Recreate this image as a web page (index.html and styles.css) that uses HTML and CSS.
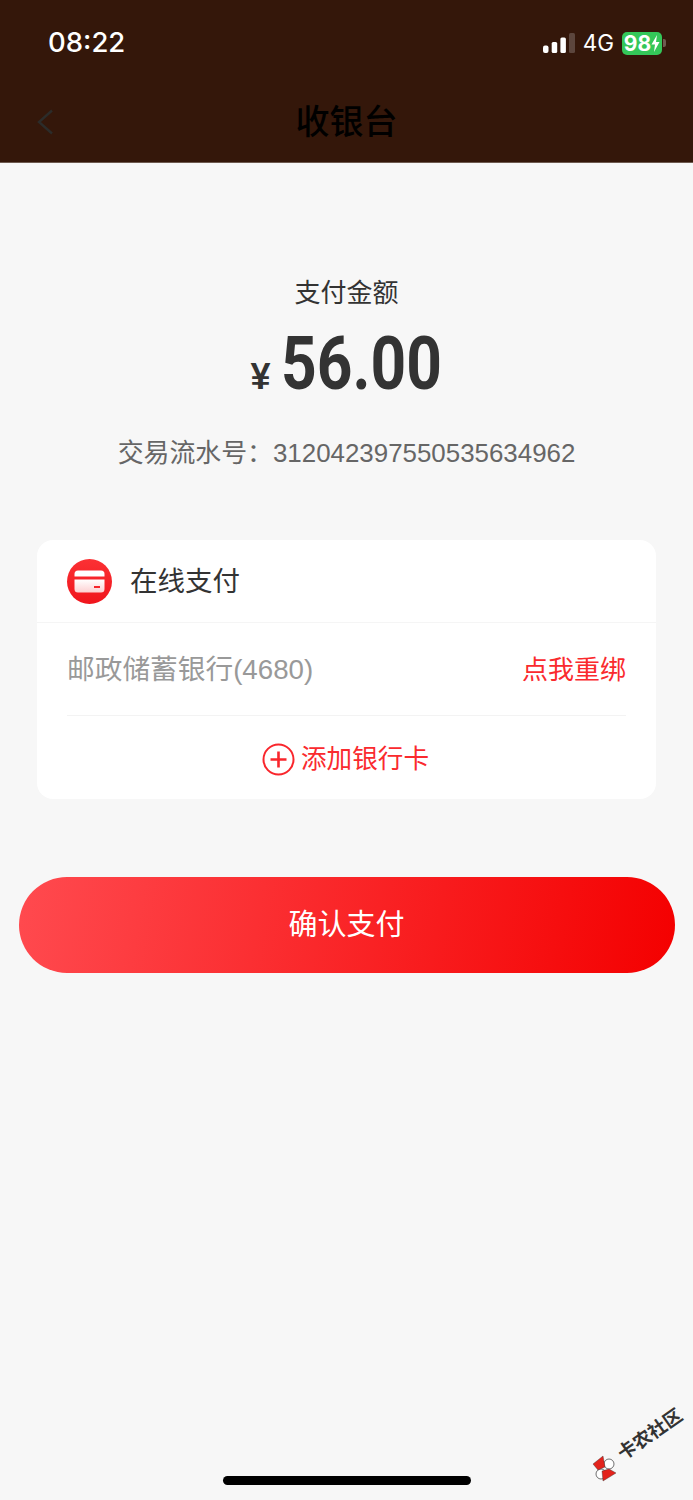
FILE: index.html
```html
<!DOCTYPE html>
<html lang="zh">
<head>
<meta charset="utf-8">
<title>收银台</title>
<link rel="stylesheet" href="styles.css">
</head>
<body>
<div class="page">
  <header class="header">
    <div class="status">
      <span class="time">08:22</span>
      <div class="status-right">
        <svg class="signal" width="32" height="20" viewBox="0 0 32 20">
          <rect x="0" y="12.500" width="5.500" height="7.500" rx="2" fill="#fff"/>
          <rect x="8.700" y="9" width="5.500" height="11" rx="1.500" fill="#fff"/>
          <rect x="17.400" y="4.500" width="5.500" height="15.500" rx="1.500" fill="#fff"/>
          <rect x="26" y="0" width="6" height="20" rx="1.500" fill="#5c463d"/>
        </svg>
        <span class="net">4G</span>
        <div class="battery">
          <span class="battery-body">98<svg class="bolt" width="9" height="17" viewBox="0 0 9 17"><path d="M6 0 0.500 9.500H4L3 17 8.500 7H5Z" fill="#fff"/></svg></span>
          <span class="battery-cap"></span>
        </div>
      </div>
    </div>
    <div class="nav">
      <svg class="back" width="16" height="26" viewBox="0 0 16 26"><path d="M15 1.500 2 13 15 24.500" fill="none" stroke="#2c2c2a" stroke-width="2.400"/></svg>
      <h1 class="title">收银台</h1>
    </div>
  </header>
  <main class="main">
    <section class="summary">
      <p class="label">支付金额</p>
      <p class="amount"><span class="yen">¥</span><span class="value">56.00</span></p>
      <p class="serial">交易流水号：<span class="serial-no">312042397550535634962</span></p>
    </section>
    <section class="card">
      <div class="card-head">
        <svg class="pay-icon" width="45" height="45" viewBox="0 0 45 45">
          <defs>
            <linearGradient id="disc" x1="0" y1="0" x2="0" y2="1"><stop offset="0" stop-color="#fb3134"/><stop offset="1" stop-color="#f0141c"/></linearGradient>
            <linearGradient id="cardfill" x1="0" y1="0" x2="0" y2="1"><stop offset="0" stop-color="#fff"/><stop offset="1" stop-color="#fdd0d2"/></linearGradient>
          </defs>
          <circle cx="22.500" cy="22.500" r="22.500" fill="url(#disc)"/>
          <path d="M7.500 15a3.500 3.500 0 0 1 3.500-3.500h23a3.500 3.500 0 0 1 3.500 3.500v2.500H7.500Z" fill="#fff"/>
          <path d="M7.500 20.500h30V30a3.500 3.500 0 0 1-3.500 3.500H11A3.500 3.500 0 0 1 7.500 30Z" fill="url(#cardfill)"/>
          <rect x="27" y="27" width="6" height="2" fill="#f5252b"/>
        </svg>
        <span class="card-title">在线支付</span>
      </div>
      <div class="card-body">
        <div class="bank-row">
          <span class="bank">邮政储蓄银行(4680)</span>
          <span class="rebind">点我重绑</span>
        </div>
        <div class="add-row">
          <svg class="plus" width="33" height="33" viewBox="0 0 33 33"><circle cx="16.500" cy="16.500" r="15" fill="none" stroke="#f9262c" stroke-width="2"/><path d="M8.500 16.500h16M16.500 8.500v16" stroke="#f9262c" stroke-width="2.600"/></svg>
          <span class="add">添加银行卡</span>
        </div>
      </div>
    </section>
    <button class="confirm" type="button">确认支付</button>
  </main>
  <div class="home-bar"></div>
  <svg class="wm-logo" width="26" height="28" viewBox="0 0 26 28">
    <circle cx="17" cy="10" r="5" fill="#fff" stroke="#333" stroke-width=".7"/>
    <circle cx="9" cy="20" r="5" fill="#fff" stroke="#333" stroke-width=".7"/>
    <path d="M1 10 11 2 13 13 6 16ZM11 27 24 19 17 15 10 17Z" fill="#e3231c" stroke="#333" stroke-width=".4"/>
  </svg>
  <span class="wm-text">卡农社区</span>
</div>
</body>
</html>
```
FILE: styles.css
```css
* { box-sizing: border-box; margin: 0; padding: 0; }
html, body { width: 693px; height: 1500px; overflow: hidden; }
body { background: #f7f7f7; font-family: "Liberation Sans", "Noto Sans CJK SC", sans-serif; }
.page { position: relative; width: 693px; height: 1500px; }

.header { height: 163px; background: #34170a; border-bottom: 1px solid #6e5a50; }
.status { height: 84px; display: flex; justify-content: space-between; align-items: flex-start; padding: 26px 27px 0 48px; }
.time { font: 500 27.500px/32px Inter, sans-serif; color: #fff; }
.status-right { display: flex; align-items: center; padding-top: 5px; }
.signal { display: block; margin-right: 8px; }
.net { font: 400 22.500px/24px Inter, sans-serif; color: #fff; margin-right: 8px; }
.battery { display: flex; align-items: center; }
.battery-body { display: flex; align-items: center; justify-content: center; width: 40px; height: 23px; border-radius: 5px; background: #34c759; color: #fff; font: 700 21px/23px Inter, sans-serif; }
.battery-cap { width: 3px; height: 8px; margin-left: 1px; border-radius: 0 2px 2px 0; background: #6e5a50; }

.nav { position: relative; height: 78px; display: flex; align-items: center; justify-content: center; padding-bottom: 6px; }
.back { position: absolute; left: 37px; top: 25px; }
.title { font: 500 34px/44px "Noto Sans CJK SC", sans-serif; color: #000; }

.main { display: flex; flex-direction: column; align-items: center; }
.summary { padding-top: 110px; text-align: center; }
.label { font: 400 26px/36px "Noto Sans CJK SC", sans-serif; color: #333; }
.amount { display: flex; justify-content: center; align-items: baseline; margin-top: 12px; height: 84px; color: #333; }
.yen { font: 700 36px/84px "Liberation Sans", sans-serif; margin-right: 10px; }
.value { display: inline-block; margin-right: -32px; font: 700 75px/84px Roboto, sans-serif; transform: scaleX(.83); transform-origin: left center; }
.serial { margin-top: 30px; font: 400 25.900px/36px "Liberation Sans", "Noto Sans CJK SC", sans-serif; color: #666; }

.card { width: 619px; height: 259px; margin-top: 69px; border-radius: 16px; background: #fff; }
.card-head { height: 83px; display: flex; align-items: center; padding: 0 30px; border-bottom: 1px solid #f5f5f5; }
.pay-icon { display: block; margin-right: 18px; }
.card-title { margin-bottom: 4px; font: 400 27.500px/36px "Noto Sans CJK SC", sans-serif; color: #333; }
.card-body { padding: 0 30px; }
.bank-row { height: 93px; display: flex; justify-content: space-between; align-items: center; border-bottom: 1px solid #f3f3f3; }
.bank { margin-top: 2px; font: 400 27.700px/36px "Liberation Sans", "Noto Sans CJK SC", sans-serif; color: #999; }
.rebind { margin-bottom: 2px; font: 400 26px/36px "Noto Sans CJK SC", sans-serif; color: #fa2a2e; }
.add-row { height: 83px; display: flex; justify-content: center; align-items: center; padding-right: 2px; }
.plus { display: block; margin: 4px 6px 0 0; }
.add { margin-bottom: 2px; font: 400 25.600px/36px "Noto Sans CJK SC", sans-serif; color: #fa2a2e; }

.confirm { width: 656px; height: 96px; margin-top: 78px; padding-bottom: 6px; border: 0; border-radius: 48px; background: linear-gradient(100deg, #ff4a4f 0%, #f40000 100%); color: #fff; font: 400 29px/36px "Noto Sans CJK SC", sans-serif; }

.home-bar { position: absolute; left: 223px; top: 1476px; width: 248px; height: 9px; border-radius: 5px; background: #000; }
.wm-logo { position: absolute; left: 592px; top: 1454px; display: block; }
.wm-text { position: absolute; left: 612px; top: 1420px; font: 700 18.500px/26px "Noto Sans CJK SC", sans-serif; color: #333; white-space: nowrap; transform: rotate(-35deg); }
```
